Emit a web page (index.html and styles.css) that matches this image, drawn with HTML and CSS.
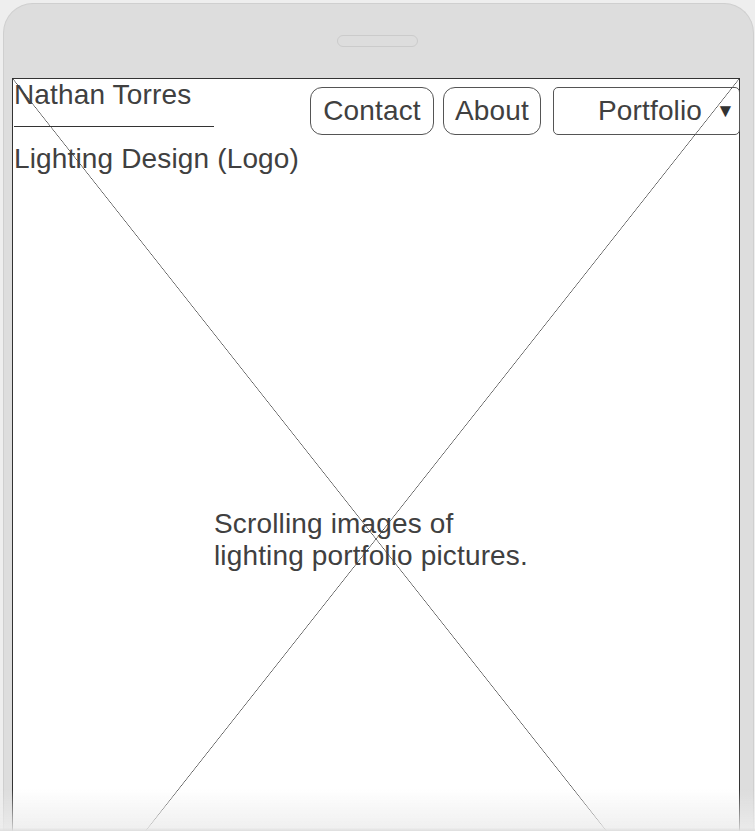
FILE: index.html
```html
<html>
<head>
<meta charset="utf-8">
<link rel="stylesheet" href="styles.css">
</head>
<body>

<div class="device">
  <div class="speaker"></div>

  <div class="screen">
    <div class="header">
      <div class="brand">
        <div class="name">Nathan Torres</div>
        <div class="logo">Lighting Design (Logo)</div>
      </div>
      <div class="nav">
        <span class="btn contact">Contact</span>
        <span class="btn about">About</span>
        <span class="select">Portfolio <span class="arrow">&#9660;</span></span>
      </div>
    </div>

    <p class="caption">Scrolling images of<br>lighting portfolio pictures.</p>
  </div>
</div>

<div class="fade"></div>

</body>
</html>
```

FILE: styles.css
```css
body { margin: 0;
 background: #eee;
 color: #404040;
 font-family: "Liberation Sans", Arial, Helvetica, sans-serif;
 font-size: 28px;
 line-height: 32px;
 letter-spacing: 0.15px;
 overflow: hidden;
}

.device {
 margin: 3px 3px 0 3px;
 width: 731px;
 height: 900px;
 padding: 31px 10px 0 8px;
 background: #ddd;
 border: 1px solid #cfcfcf;
 border-bottom: none;
 border-radius: 30px 30px 0 0;
}

.speaker {
 width: 79px;
 height: 10px;
 margin: 0 auto 31px auto;
 border: 1px solid #cbcbcb;
 border-radius: 6px;
}

.screen {
 width: 726px;
 height: 920px;
 border: 1px solid #333;
 background-color: #fff;
 background-image:
  linear-gradient(to top right, transparent calc(50% - 0.6px), #555 50%, transparent calc(50% + 0.6px)),
  linear-gradient(to bottom right, transparent calc(50% - 0.6px), #555 50%, transparent calc(50% + 0.6px));
}

.header { display: flex; justify-content: space-between; align-items: flex-start }

.brand { padding-left: 1px }
.name { width: 200px; padding-bottom: 15px; border-bottom: 1px solid #333 }
.logo { margin-top: 16px; white-space: nowrap }

.nav { display: flex; align-items: center; margin-top: 8px; margin-right: -1px }

.btn {
 display: flex;
 align-items: center;
 justify-content: center;
 height: 46px;
 border: 1px solid #555;
 border-radius: 12px;
}
.contact { width: 122px; margin-right: 9px }
.about { width: 96px; margin-right: 12px }

.select {
 display: flex;
 align-items: center;
 width: 141px;
 height: 46px;
 padding-left: 44px;
 border: 1px solid #555;
 border-radius: 5px;
 white-space: nowrap;
}
.arrow { font-size: 19px; margin-left: 14px; color: #333 }

.caption { margin: 333px 0 0 201px }

.fade {
 position: fixed;
 left: 0;
 right: 0;
 bottom: 0;
 height: 42px;
 background: linear-gradient(rgba(236,236,236,0), rgba(236,236,236,0.8) 92%, #ddd 100%);
 pointer-events: none;
}
```
